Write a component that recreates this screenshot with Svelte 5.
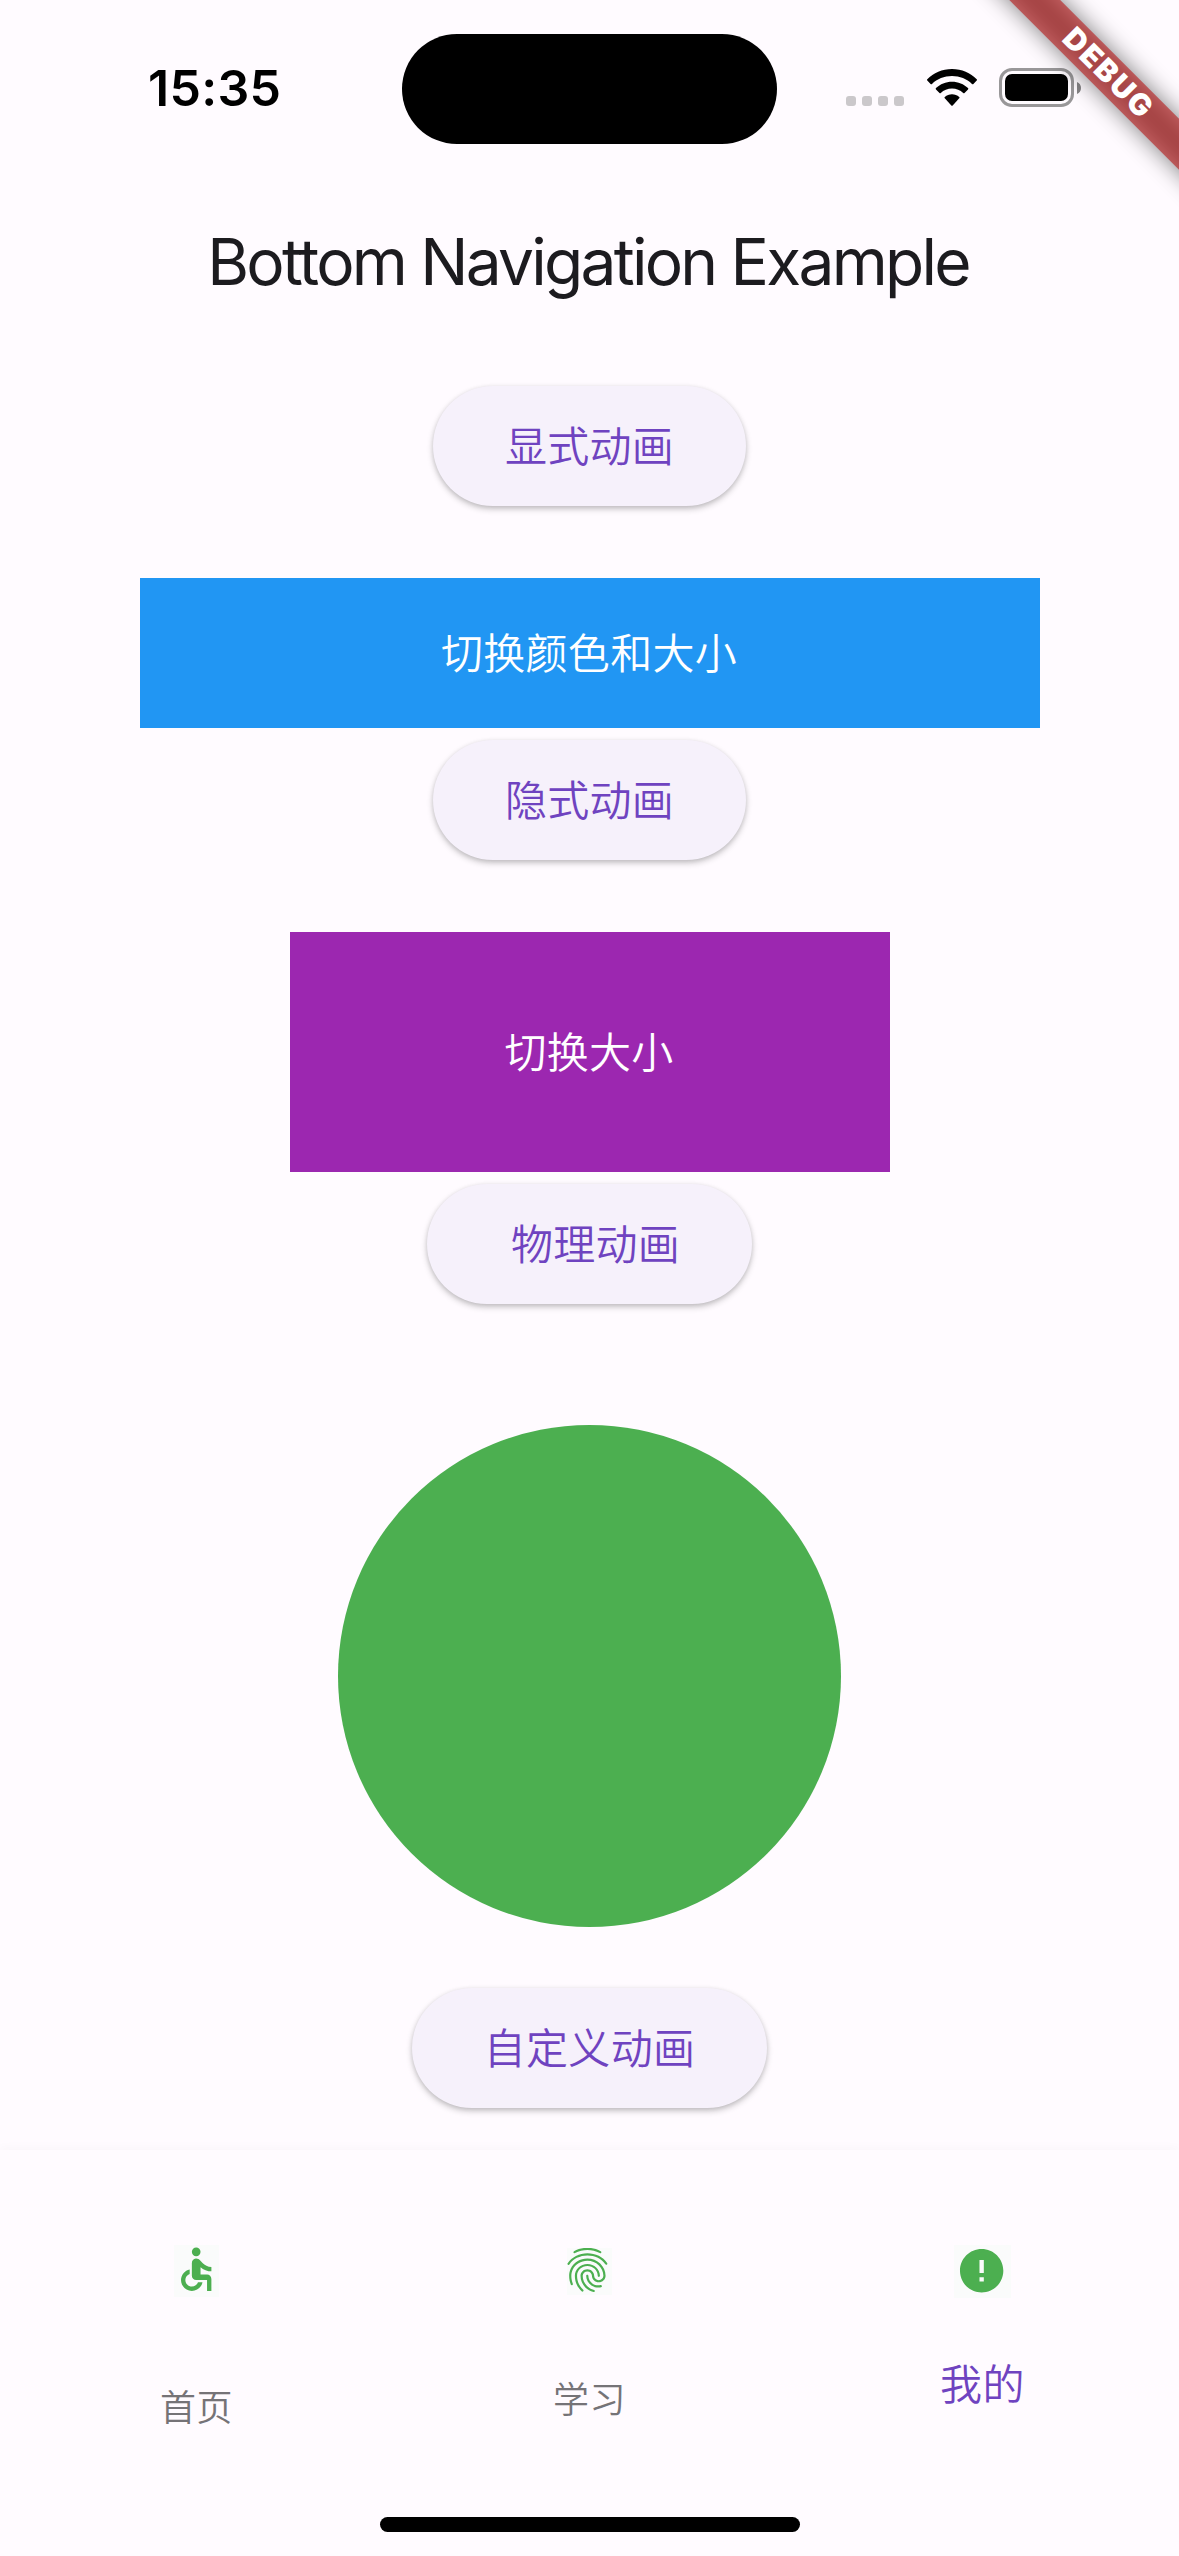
<script>
  const navItems = [
    {
      id: 'home',
      label: '首页',
      viewBox: '1.77 0.85 20.74 23.96',
      path: 'M12 2a2 2 0 1 0 0 4 2 2 0 0 0 0-4zM19 13v-2c-1.54.02-3.09-.75-4.07-1.83l-1.29-1.43c-.17-.19-.38-.34-.61-.45-.01 0-.01-.01-.02-.01H13c-.35-.2-.75-.3-1.19-.26C10.76 7.11 10 8.04 10 9.09V15c0 1.1.9 2 2 2h5v5h2v-5.5c0-1.1-.9-2-2-2h-3v-3.45c1.29 1.07 3.25 1.94 5 1.95zm-6.17 5c-.41 1.16-1.52 2-2.83 2-1.66 0-3-1.34-3-3 0-1.31.84-2.41 2-2.83V12.1c-2.28.46-4 2.48-4 4.9 0 2.76 2.24 5 5 5 2.42 0 4.44-1.72 4.9-4h-2.07z'
    },
    {
      id: 'study',
      label: '学习',
      viewBox: '2.8 2.1 20.3 21.2',
      path: 'M17.81 4.47c-.08 0-.16-.02-.23-.06C15.66 3.42 14 3 12.01 3c-1.98 0-3.86.47-5.57 1.41-.24.13-.54.04-.68-.2-.13-.24-.04-.55.2-.68C7.82 2.52 9.86 2 12.01 2c2.13 0 3.99.47 6.03 1.52.25.13.34.43.21.67-.09.18-.26.28-.44.28zM3.5 9.72c-.1 0-.2-.03-.29-.09-.23-.16-.28-.47-.12-.7.99-1.4 2.25-2.5 3.75-3.27C9.98 4.04 14 4.03 17.15 5.65c1.5.77 2.76 1.86 3.75 3.25.16.22.11.54-.12.7-.23.16-.54.11-.7-.12-.9-1.26-2.04-2.25-3.39-2.94-2.87-1.47-6.54-1.47-9.4.01-1.36.7-2.5 1.7-3.4 2.96-.08.14-.23.21-.39.21zm6.25 12.07c-.13 0-.26-.05-.35-.15-.87-.87-1.34-1.43-2.01-2.64-.69-1.23-1.05-2.73-1.05-4.34 0-2.97 2.54-5.39 5.66-5.39s5.66 2.42 5.66 5.39c0 .28-.22.5-.5.5s-.5-.22-.5-.5c0-2.42-2.09-4.39-4.66-4.39-2.57 0-4.66 1.97-4.66 4.39 0 1.44.32 2.77.93 3.85.64 1.15 1.08 1.64 1.85 2.42.19.2.19.51 0 .71-.11.1-.24.15-.37.15zm7.17-1.85c-1.19 0-2.24-.3-3.1-.89-1.49-1.01-2.38-2.65-2.38-4.39 0-.28.22-.5.5-.5s.5.22.5.5c0 1.41.72 2.74 1.94 3.56.71.48 1.54.71 2.54.71.24 0 .64-.03 1.04-.1.27-.05.53.13.58.41.05.27-.13.53-.41.58-.57.11-1.07.12-1.21.12zM14.91 22c-.04 0-.09-.01-.13-.02-1.59-.44-2.63-1.03-3.72-2.1-1.4-1.39-2.17-3.24-2.17-5.22 0-1.62 1.38-2.94 3.08-2.94 1.7 0 3.08 1.32 3.08 2.94 0 1.07.93 1.94 2.08 1.94s2.08-.87 2.08-1.94c0-3.77-3.25-6.83-7.25-6.83-2.84 0-5.44 1.58-6.61 4.03-.39.81-.59 1.76-.59 2.8 0 .78.07 2.01.67 3.61.1.26-.03.55-.29.64-.26.1-.55-.04-.64-.29-.49-1.31-.73-2.61-.73-3.96 0-1.2.23-2.29.68-3.24 1.33-2.79 4.28-4.6 7.51-4.6 4.55 0 8.25 3.51 8.25 7.83 0 1.62-1.38 2.94-3.08 2.94s-3.08-1.32-3.08-2.94c0-1.07-.93-1.94-2.08-1.94s-2.08.87-2.08 1.94c0 1.71.66 3.31 1.87 4.51.95.94 1.86 1.46 3.27 1.85.27.07.42.35.35.61-.05.23-.26.38-.47.38z'
    },
    {
      id: 'mine',
      label: '我的',
      viewBox: '-0.76 0.16 26.3 24.4',
      path: 'M12 2C6.48 2 2 6.48 2 12s4.48 10 10 10 10-4.48 10-10S17.52 2 12 2zm1 15h-2v-2h2v2zm0-4h-2V7h2v6z'
    }
  ];
  let selected = $state('mine');
</script>

<div class="screen">
  <header class="status">
    <div class="time">15:35</div>
    <div class="island"></div>
    <div class="indicators">
      <div class="cell-dots"><i></i><i></i><i></i><i></i></div>
      <svg class="wifi" viewBox="0 0 50 37">
        <path d="M25 0C34.800 0 43.500 3.900 49.700 10.200q.6.700 0 1.300l-3.300 3.400q-.7.700-1.400 0C39.800 9.900 32.800 7 25 7S10.200 9.900 5 14.900q-.7.700-1.400 0L.3 11.500q-.6-.6 0-1.300C6.500 3.900 15.200 0 25 0z" />
        <path d="M25 12.700c6.200 0 11.800 2.400 16 6.400q.7.700 0 1.300l-3.500 3.500q-.6.600-1.300 0c-2.900-2.700-6.900-4.400-11.200-4.400s-8.300 1.700-11.200 4.400q-.7.600-1.300 0L9 20.400q-.7-.6 0-1.300c4.200-4 9.800-6.400 16-6.400z" />
        <path d="M25 25.300c2.800 0 5.200 1 7.200 2.700q.6.600 0 1.300l-6.500 7.200q-.7.700-1.400 0l-6.500-7.200q-.6-.7 0-1.300c2-1.700 4.400-2.700 7.200-2.700z" />
      </svg>
      <div class="battery">
        <div class="shell"><div class="charge"></div></div>
        <svg class="nub" viewBox="0 0 4 12"><path d="M0 0c2.500 1 4 3.200 4 6s-1.500 5-4 6z" /></svg>
      </div>
    </div>
  </header>

  <h1>Bottom Navigation Example</h1>

  <main>
    <button class="pill">显式动画</button>
    <div class="box wide">切换颜色和大小</div>
    <button class="pill">隐式动画</button>
    <div class="box medium">切换大小</div>
    <button class="pill lead">物理动画</button>
    <div class="stage"><div class="ball"></div></div>
    <button class="pill">自定义动画</button>
  </main>

  <nav>
    {#each navItems as item (item.id)}
      <button class="tab {item.id}" class:active={selected === item.id} onclick={() => (selected = item.id)}>
        <span class="icon"><svg viewBox={item.viewBox}><path d={item.path} /></svg></span>
        <span class="label">{item.label}</span>
      </button>
    {/each}
  </nav>

  <footer><div class="home-bar"></div></footer>

  <div class="ribbon">
    <div class="ribbon-shadow"></div>
    <div class="ribbon-band">DEBUG</div>
  </div>
</div>

<style>
  :global(body) {
    background: #fffbff;
  }
  .screen {
    position: relative;
    width: 1179px;
    height: 2556px;
    overflow: hidden;
    display: flex;
    flex-direction: column;
    background: #fffbff;
    font-family: Inter, 'Noto Sans CJK SC', sans-serif;
  }
  button {
    border: 0;
    margin: 0;
    padding: 0;
    background: none;
    font-family: inherit;
  }
  .status {
    flex: none;
    height: 177px;
    display: grid;
    grid-template-columns: 402px 375px 402px;
  }
  .time {
    padding: 58px 0 0 148px;
    font-size: 50px;
    line-height: 60px;
    font-weight: 600;
    letter-spacing: 0.3px;
    color: #000;
  }
  .island {
    height: 110px;
    margin-top: 34px;
    border-radius: 55px;
    background: #000;
  }
  .indicators {
    display: flex;
    align-items: flex-start;
    padding: 68px 0 0 69px;
  }
  .cell-dots {
    display: flex;
    gap: 6px;
    padding-top: 28px;
  }
  .cell-dots i {
    width: 10px;
    height: 10px;
    border-radius: 3px;
    background: #cbc8cb;
  }
  .wifi {
    width: 50px;
    height: 37px;
    margin: 1px 0 0 23px;
  }
  .battery {
    display: flex;
    align-items: center;
    gap: 3px;
    margin-left: 22px;
  }
  .shell {
    box-sizing: border-box;
    width: 75px;
    height: 39px;
    padding: 3px;
    border: 3px solid #999799;
    border-radius: 13px;
  }
  .charge {
    height: 27px;
    border-radius: 7px;
    background: #000;
  }
  .nub {
    width: 4px;
    height: 12px;
    fill: #858385;
  }
  h1 {
    flex: none;
    height: 168px;
    margin: 0;
    padding-right: 3px;
    line-height: 170px;
    text-align: center;
    font-size: 64px;
    font-weight: 400;
    letter-spacing: -2.750px;
    white-space: nowrap;
    color: #1c1b1f;
  }
  main {
    flex: none;
    height: 1804.500px;
    box-sizing: border-box;
    padding-top: 40.500px;
    display: flex;
    flex-direction: column;
    align-items: center;
  }
  .pill {
    flex: none;
    height: 120px;
    padding: 2px 72px 0;
    border-radius: 60px;
    background: #f6f1fb;
    box-shadow:
      0 3px 6px rgba(0, 0, 0, 0.22),
      0 1px 4px rgba(0, 0, 0, 0.08);
    color: #6f43c0;
    font-size: 42px;
    font-weight: 350;
    letter-spacing: 0.3px;
    line-height: 60px;
  }
  .lead {
    padding-left: 84px;
  }
  .box {
    flex: none;
    box-sizing: border-box;
    display: flex;
    align-items: center;
    justify-content: center;
    margin: 72px 0 12px;
    padding: 0 1px 5px 0;
    color: #fff;
    font-size: 42px;
    font-weight: 350;
    letter-spacing: 0.3px;
  }
  .wide {
    width: 900px;
    height: 150px;
    background: #2196f3;
  }
  .medium {
    width: 600px;
    height: 240px;
    background: #9c27b0;
  }
  .stage {
    flex: none;
    width: 600px;
    height: 600px;
    margin: 72px 0 12px;
    display: grid;
    place-items: center;
  }
  .ball {
    width: 503px;
    height: 502px;
    border-radius: 50%;
    background: #4caf50;
  }
  nav {
    flex: none;
    height: 304.500px;
    display: grid;
    grid-template-columns: repeat(3, 1fr);
    background: #fffbff;
    box-shadow: 0 -4px 8px rgba(0, 0, 0, 0.02);
  }
  .tab {
    display: flex;
    flex-direction: column;
    align-items: center;
    padding-top: 95.500px;
    color: #757377;
  }
  .icon {
    display: flex;
    width: 45px;
    height: 52px;
    background: #fafbfb;
  }
  .icon svg {
    width: 100%;
    height: 100%;
    fill: #4caf50;
  }
  .study {
    padding-top: 98.500px;
  }
  .study .icon {
    height: 47px;
  }
  .mine .icon {
    width: 57px;
    height: 53px;
  }
  .label {
    margin-top: 84px;
    font-size: 36px;
    line-height: 54px;
    font-weight: 350;
    letter-spacing: 0.5px;
  }
  .study .label {
    margin-top: 78px;
  }
  .mine .label {
    margin-top: 60px;
  }
  .active .label {
    color: #6f43c0;
    font-size: 42px;
  }
  footer {
    flex: none;
    height: 102px;
    display: flex;
    justify-content: center;
    padding-top: 63px;
    box-sizing: border-box;
  }
  .home-bar {
    width: 420px;
    height: 15px;
    border-radius: 8px;
    background: #000;
  }
  /* Corner ribbon hung across the top right of the screen */
  .ribbon {
    position: absolute;
    top: 84px;
    right: -240px;
    width: 480px;
    height: 36px;
    transform-origin: 240px -84px;
    transform: rotate(45deg);
  }
  .ribbon-shadow {
    position: absolute;
    inset: 0;
    background: rgba(0, 0, 0, 0.5);
    filter: blur(11.900px);
  }
  .ribbon-band {
    position: absolute;
    inset: 0;
    padding-left: 4px;
    background: rgba(183, 28, 28, 0.627);
    color: #fff;
    text-align: center;
    font-size: 30px;
    line-height: 34px;
    font-weight: 900;
    letter-spacing: 2px;
  }
</style>
